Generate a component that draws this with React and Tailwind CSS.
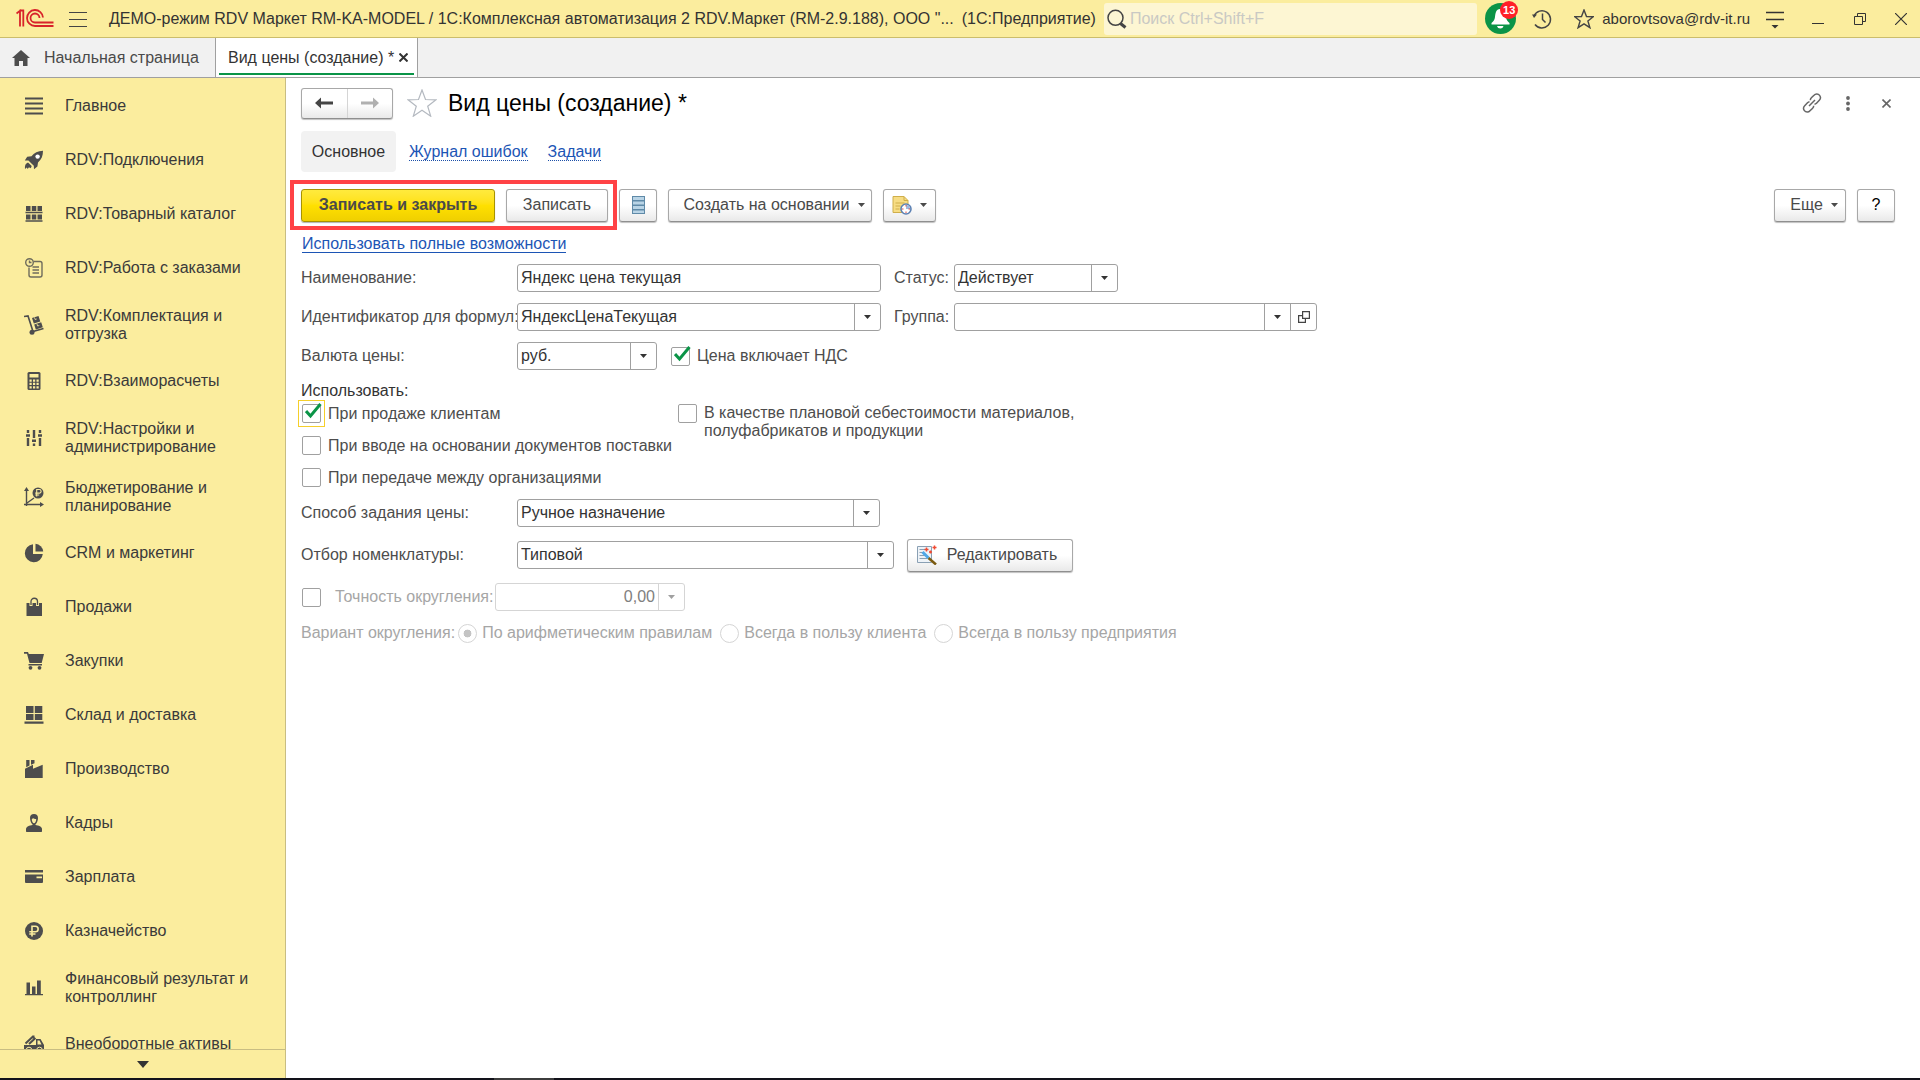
const FONT = "font-['Liberation_Sans',Arial,sans-serif]"

const buttonBase =
  "flex h-[33px] shrink-0 items-center justify-center rounded-[3px] border border-[#a8a8a8] border-b-[#8f8f8f] bg-linear-to-b from-white from-50% to-[#e9e9e9] text-[#4a4a4a] shadow-[0_1px_1px_rgba(0,0,0,0.25)]"

const icons = {
  menu: <path d="M1 2.5h18M1 7.5h18M1 12.5h18M1 17.5h18" stroke="currentColor" strokeWidth="2.2" />,
  rocket: (
    <>
      <path
        fill="currentColor"
        d="M19 .8C14 1 10 3 7.5 6.2L3.2 6.8.8 10.4l3.6.2 5.4 5.2.2 3.4 3.4-2.8.6-4C17.5 9.5 19 6 19 .8z"
      />
      <circle cx="13.6" cy="6.6" r="2.2" fill="#fff" />
      <path fill="currentColor" d="M4 12.5c-2.500 1-3.500 3-3 6.500l1.800-1.600.8 1.600 1.400-1.800 1.500 1c.6-.6 1-1.300 1.200-2.200z" />
    </>
  ),
  catalog: (
    <path
      fill="currentColor"
      d="M2 2h4.500v5H2zM7.800 2h4.500v5H7.800zM13.5 2H18v5h-4.500zM1.500 7.800h17v1.500h-17zM2 10.500h4.500v5H2zM7.800 10.500h4.500v5H7.800zM13.5 10.500H18v5h-4.500zM1.500 16.200h17v1.600h-17z"
    />
  ),
  orders: (
    <g fill="none" stroke="currentColor" strokeWidth="1.4" opacity=".8">
      <path d="M9.500 3.500H16a2 2 0 0 1 2 2V17a2 2 0 0 1-2 2H7a2 2 0 0 1-2-2V9.500" />
      <circle cx="5.500" cy="4.500" r="3.800" />
      <path d="M5.500 2.500v2h2M8.500 9h6.500M8.500 12h6.500M8.500 15h6.500" />
    </g>
  ),
  trolley: (
    <>
      <path d="M0 1.500l4-.5 5 15.500 10.500-3" fill="none" stroke="currentColor" strokeWidth="1.6" />
      <path fill="currentColor" d="M8 3l6.500-2 1.800 5.500-6.500 2zM10.200 9.500l7-2.200 1.600 5-7 2.200z" />
      <path d="M10.500 2.500l.6 2 1.600-.5M13 9l.6 2 1.700-.5" fill="none" stroke="#fbed9e" strokeWidth=".8" />
      <circle cx="8" cy="17.300" r="2.500" fill="currentColor" />
    </>
  ),
  calculator: (
    <>
      <rect x="3.5" y="1" width="13" height="18" rx="1.5" fill="currentColor" />
      <path
        fill="#fbed9e"
        d="M5.500 3h9v3.500h-9zM5.500 8.500h2.200v2.200H5.500zM9 8.500h2.200v2.200H9zM12.500 8.500h2.200v2.200h-2.200zM5.500 11.800h2.200V14H5.500zM9 11.800h2.200V14H9zM12.500 11.800h2.200V14h-2.200zM5.500 15.200h2.200v2.200H5.500zM9 15.200h2.200v2.200H9zM12.500 15.200h2.200v2.200h-2.200z"
      />
    </>
  ),
  sliders: (
    <g stroke="currentColor">
      <path strokeWidth="2.400" d="M4 2v3M4 10v8M10 2v8M10 15.500V18M16 2v3M16 10v8" />
      <path strokeWidth="2.400" d="M2 7.500h4M8 12.800h4M14 7.500h4" />
    </g>
  ),
  budget: (
    <>
      <path d="M2.500 19V3M0 17.500h17M3 16l7-5" fill="none" stroke="currentColor" strokeWidth="1.4" />
      <path fill="currentColor" d="M2.500 0L5 4H0zM20 17.500L16 20v-5z" />
      <circle cx="14" cy="6" r="5.500" fill="currentColor" />
      <path d="M12.700 9.500v-7h2.600a1.700 1.700 0 0 1 0 3.600h-4.100M11.200 8h4" fill="none" stroke="#fbed9e" strokeWidth="1.1" />
    </>
  ),
  pie: (
    <>
      <path fill="currentColor" d="M9 1.200V11h9.800A9 9 0 1 1 9 1.200z" />
      <path fill="currentColor" d="M11.500.8a8.500 8.500 0 0 1 7.700 7.700h-7.700z" />
    </>
  ),
  bag: (
    <>
      <path fill="currentColor" d="M2.500 6H18v13H2.500z" />
      <path d="M7 9V4.500a3.200 3.200 0 0 1 6.500 0V9" fill="none" stroke="#fbed9e" strokeWidth="3" />
      <path d="M7 8V4.500a3.200 3.200 0 0 1 6.500 0V8" fill="none" stroke="currentColor" strokeWidth="1.3" />
    </>
  ),
  cart: (
    <>
      <path fill="currentColor" d="M0 1h4l.8 2H20l-2.300 9H5.500L3 2.800H0zM4.500 13h13.500v1.500H4.500z" />
      <circle cx="6.500" cy="16.800" r="1.900" fill="currentColor" />
      <circle cx="15.500" cy="16.800" r="1.900" fill="currentColor" />
    </>
  ),
  warehouse: (
    <path fill="currentColor" d="M2 1h7.500v7H2zM10.800 1h7.500v7h-7.500zM2 9h7.500v6H2zM10.800 9h7.500v6h-7.500zM.5 16.500h19v2.200H.5z" />
  ),
  factory: <path fill="currentColor" d="M1 19V9.800l8-4v4l9.700-4V19zM2.200 1H5.500v5.500L2.200 8.200zM7 1h3.500v3.200L7 5.800z" />,
  person: (
    <path
      fill="currentColor"
      fillRule="evenodd"
      d="M10 1c2.600 0 4 1.600 4 4s-1 5.200-2.500 6.200V12c3 .5 6.500 1.500 6.500 4v2c0 1-.5 1-1.500 1h-13c-1 0-1.500 0-1.500-1v-2c0-2.500 3.500-3.500 6.500-4v-.8C7 10.200 6 7.400 6 5s1.400-4 4-4zM7.800 6c0 2.400 1 4.200 2.200 4.200S12.200 8.400 12.200 6C11 6 9.500 5.800 9 5c-.2.600-.6 1-1.200 1z"
    />
  ),
  card: <path fill="currentColor" fillRule="evenodd" d="M1 3h18v2.500H1zM1 7.500h18V15a1 1 0 0 1-1 1H2a1 1 0 0 1-1-1zM12.500 9.500v1.800H18V9.500z" />,
  ruble: (
    <>
      <circle cx="10" cy="10" r="9" fill="currentColor" />
      <path d="M8 15.500V5.200h3.400a2.700 2.700 0 0 1 0 5.500H5.300M5.300 13h6.200" fill="none" stroke="#fbed9e" strokeWidth="1.6" />
    </>
  ),
  bars: <path fill="currentColor" d="M2.500 4.500H6V16H2.500zM8 8.500h3.500V16H8zM13 2.500h3.800V16H13zM1 16h18v1.200H1z" />,
  truck: (
    <>
      <path fill="currentColor" fillRule="evenodd" d="M0 11h12V5h4.500l3.500 6v6H0zM13.500 6.500v4h4l-2-4z" />
      <path d="M1.500 9.500L9.500 2M5 10l6.500-6M9.500 1.500v3" fill="none" stroke="currentColor" strokeWidth="2" />
      <circle cx="5" cy="16" r="2.800" fill="currentColor" stroke="#fbed9e" />
      <circle cx="15.500" cy="16" r="2.800" fill="currentColor" stroke="#fbed9e" />
    </>
  ),
}

const sections = [
  { name: "Главное", icon: "menu" },
  { name: "RDV:Подключения", icon: "rocket" },
  { name: "RDV:Товарный каталог", icon: "catalog" },
  { name: "RDV:Работа с заказами", icon: "orders" },
  { name: "RDV:Комплектация и отгрузка", icon: "trolley", tall: true },
  { name: "RDV:Взаиморасчеты", icon: "calculator" },
  { name: "RDV:Настройки и администрирование", icon: "sliders", tall: true },
  { name: "Бюджетирование и планирование", icon: "budget", tall: true },
  { name: "CRM и маркетинг", icon: "pie" },
  { name: "Продажи", icon: "bag" },
  { name: "Закупки", icon: "cart" },
  { name: "Склад и доставка", icon: "warehouse" },
  { name: "Производство", icon: "factory" },
  { name: "Кадры", icon: "person" },
  { name: "Зарплата", icon: "card" },
  { name: "Казначейство", icon: "ruble" },
  { name: "Финансовый результат и контроллинг", icon: "bars", tall: true },
  { name: "Внеоборотные активы", icon: "truck" },
]

function Caret({ className = "" }) {
  return (
    <svg className={`h-1 w-[7px] shrink-0 ${className}`} viewBox="0 0 7 4" fill="currentColor">
      <path d="M0 0h7L3.500 4z" />
    </svg>
  )
}

function Logo() {
  return (
    <svg className="h-5 w-[38px]" viewBox="0 0 38 20" fill="none" stroke="#d8232a">
      <path strokeWidth="1.8" d="M.5 4.500L4 1.800V17.500M3.500 1.500h3.800v16" />
      <path strokeWidth="1.8" d="M27 8.500A8 8 0 1 0 19 17H37.500" />
      <path strokeWidth="1.8" d="M23.500 9a4.500 4.500 0 1 0-4.500 4.500H37.500" />
    </svg>
  )
}

function TopBar() {
  return (
    <header className="flex h-[38px] shrink-0 items-center border-b border-[#cbbd6c] bg-[#fbed9e] pl-4 text-[#333]">
      <Logo />
      <button aria-label="Меню" className="ml-[15px]">
        <svg className="h-[18px] w-[18px]" viewBox="0 0 18 18" stroke="#444" strokeWidth="1.2">
          <path d="M0 2.500h18M0 9.500h18M0 16.500h18" />
        </svg>
      </button>
      <span className="ml-[22px] shrink-0 whitespace-nowrap">
        ДЕМО-режим RDV Маркет RM-KA-MODEL / 1С:Комплексная автоматизация 2 RDV.Маркет (RM-2.9.188), ООО "...
      </span>
      <span className="ml-2 shrink-0">(1С:Предприятие)</span>
      <label className="ml-2 flex h-8 min-w-0 flex-1 items-center rounded-[3px] bg-[#fdf6d3] pl-[3px]">
        <svg className="h-5 w-5 shrink-0" viewBox="0 0 20 20" fill="none" stroke="#444">
          <circle cx="8.500" cy="8.800" r="7.500" strokeWidth="1.5" />
          <path d="M13.500 14.500l5 4" strokeWidth="3" />
        </svg>
        <input
          aria-label="Поиск"
          placeholder="Поиск Ctrl+Shift+F"
          className="ml-[3px] w-full min-w-0 bg-transparent outline-none placeholder:text-[#c9c9c4]"
        />
      </label>
      <button aria-label="Оповещения" className="relative ml-2 h-[31px] w-[31px] shrink-0 rounded-full bg-[#0a9447]">
        <svg className="h-[31px] w-[31px]" viewBox="0 0 31 31" fill="#fff">
          <path d="M15 6c-4 0-4.500 4-5 8-.4 3-1.500 4-3.500 6v1.500h18V20c-2-2-3.100-3-3.500-6-.5-4-1.500-8-6-8zM12 23h6.500c-.5 1.700-1.500 2.500-3.200 2.500S12.500 24.700 12 23z" />
        </svg>
        <span className="absolute -top-0.5 left-[15px] flex h-[18px] w-[18px] items-center justify-center rounded-full bg-[#ff2027] text-[11px] font-bold text-white">
          13
        </span>
      </button>
      <button aria-label="История" className="ml-4">
        <svg className="h-5 w-5" viewBox="0 0 20 20" fill="none" stroke="#444" strokeWidth="1.5">
          <path d="M2 7A8.600 8.600 0 1 1 3 15.500M10.500 4.500v6l3 3" />
          <path d="M0 5.500h5L2 9z" fill="#444" stroke="none" />
        </svg>
      </button>
      <button aria-label="Избранное" className="ml-[22px]">
        <svg className="h-5 w-5" viewBox="0 0 20 20" fill="none" stroke="#444" strokeWidth="1.4">
          <path d="M10 1l2.500 6.500 6.800.2-5.400 4.200 2 6.800L10 14.800l-5.900 3.900 2-6.800L.7 7.700l6.800-.2z" />
        </svg>
      </button>
      <span className="ml-2 shrink-0 text-[15px]">aborovtsova@rdv-it.ru</span>
      <button aria-label="Настройки" className="ml-4">
        <svg className="h-5 w-[18px]" viewBox="0 0 18 20" stroke="#333" strokeWidth="1.3">
          <path d="M0 3.500h18M0 10.500h18" />
          <path d="M5.500 16h7L9 19.500z" fill="#333" stroke="none" />
        </svg>
      </button>
      <button aria-label="Свернуть" className="ml-7">
        <svg className="h-3 w-3" viewBox="0 0 12 12" stroke="#333">
          <path d="M0 10.500h12" />
        </svg>
      </button>
      <button aria-label="Развернуть" className="ml-[30px]">
        <svg className="h-3 w-3" viewBox="0 0 12 12" fill="none" stroke="#333">
          <path d="M.5 3.500h8v8h-8zM3.500 3V.5h8v8H9" />
        </svg>
      </button>
      <button aria-label="Закрыть" className="mr-[13px] ml-[29px]">
        <svg className="h-3 w-3" viewBox="0 0 12 12" stroke="#333" strokeWidth="1.2">
          <path d="M0 0l12 12M12 0L0 12" />
        </svg>
      </button>
    </header>
  )
}

function WindowTabs() {
  return (
    <nav className="flex h-10 shrink-0 border-b border-[#a0a0a0] bg-[#f1f1f1] text-[#4a4a4a]">
      <button className="flex w-[215px] items-center pl-3">
        <svg className="h-4 w-[18px]" viewBox="0 0 18 16" fill="#4d4d4d">
          <path d="M9 0l9 8h-2.500v8H11v-5H7v5H2.500V8H0z" />
        </svg>
        <span className="ml-3.5">Начальная страница</span>
      </button>
      <div className="flex w-[203px] flex-col border-x border-[#a0a0a0] bg-white px-[3px] text-[#333]">
        <div className="flex h-[35px] items-center pt-1 pl-[9px]">
          <span className="whitespace-nowrap">Вид цены (создание) *</span>
          <button aria-label="Закрыть вкладку" className="ml-[5px]">
            <svg className="h-[9px] w-[9px]" viewBox="0 0 9 9" stroke="#333" strokeWidth="2">
              <path d="M.5.500l8 8M8.500.500l-8 8" />
            </svg>
          </button>
        </div>
        <div className="h-0.5 bg-[#0a9447]" />
      </div>
    </nav>
  )
}

function Sidebar() {
  return (
    <aside className="flex w-[286px] shrink-0 flex-col border-r border-[#c8bd82] bg-[#fbed9e] text-[#3a3a3a]">
      <nav className="min-h-0 flex-1 overflow-hidden pt-px">
        {sections.map((section) => (
          <a
            key={section.name}
            href="#"
            className={`flex items-center pr-8 pl-6 leading-[18px] ${section.tall ? "h-[59px]" : "h-[54px]"}`}
          >
            <svg className="h-5 w-5 shrink-0 text-[#4d4d4d]" viewBox="0 0 20 20" fill="none">
              {icons[section.icon]}
            </svg>
            <span className="ml-[21px]">{section.name}</span>
          </a>
        ))}
      </nav>
      <button aria-label="Прокрутить вниз" className="flex h-[29px] items-center justify-center border-t border-[#c8bd82]">
        <svg className="h-[7px] w-3" viewBox="0 0 12 7" fill="#333">
          <path d="M0 0h12L6 7z" />
        </svg>
      </button>
    </aside>
  )
}

function FormHeader() {
  return (
    <div className="flex h-8 items-center">
      <div className="flex h-[31px] w-[92px] rounded-[3px] border border-[#a8a8a8] border-b-[#8f8f8f] bg-linear-to-b from-white from-50% to-[#e9e9e9] shadow-[0_1px_1px_rgba(0,0,0,0.25)]">
        <button aria-label="Назад" className="flex flex-1 items-center justify-center border-r border-[#d5d5d5] text-[#444]">
          <svg className="h-3 w-[18px]" viewBox="0 0 18 12" fill="currentColor">
            <path d="M0 6l6-5.500V4.500h12v3H6v4z" />
          </svg>
        </button>
        <button aria-label="Вперед" className="flex flex-1 items-center justify-center text-[#b0b0b0]">
          <svg className="h-3 w-[18px]" viewBox="0 0 18 12" fill="currentColor">
            <path d="M18 6L12 .5V4.500H0v3h12v4z" />
          </svg>
        </button>
      </div>
      <button aria-label="Добавить в избранное" className="ml-3.5">
        <svg className="h-7 w-[30px]" viewBox="0 0 30 28" fill="none" stroke="#b4b9c0" strokeWidth="1.2">
          <path d="M15 1l3.500 9.500 10.500.3-8.300 6.400 3 10L15 21.300 6.300 27.200l3-10L1 10.800l10.500-.3z" />
        </svg>
      </button>
      <h1 className="ml-[11px] text-[23px] text-black">Вид цены (создание) *</h1>
      <div className="mr-[29px] ml-auto flex items-center text-[#666]">
        <button aria-label="Ссылка">
          <svg className="h-5 w-5" viewBox="0 0 20 20" fill="none" stroke="currentColor" strokeWidth="1.5">
            <path d="M8.300 7.300C8.300 6 8.800 5.300 9.600 4.500L12 2.200a3.600 3.600 0 0 1 5.600.2c1.100 1.500 1 3.600-.3 4.900l-2.800 2.900c-.5.500-1.200.9-2 1M11.700 12.700c0 1.300-.5 2-1.300 2.800L8 17.800a3.600 3.600 0 0 1-5.600-.2c-1.100-1.500-1-3.600.3-4.900l2.800-2.900c.5-.5 1.200-.9 2-1M7 13l6-6" />
          </svg>
        </button>
        <button aria-label="Действия" className="ml-6">
          <svg className="h-[15px] w-1" viewBox="0 0 4 15" fill="currentColor">
            <circle cx="2" cy="2" r="1.900" />
            <circle cx="2" cy="7.500" r="1.900" />
            <circle cx="2" cy="13" r="1.900" />
          </svg>
        </button>
        <button aria-label="Закрыть форму" className="ml-8">
          <svg className="h-[9px] w-[9px]" viewBox="0 0 9 9" stroke="currentColor" strokeWidth="1.6">
            <path d="M.5.500l8 8M8.500.500l-8 8" />
          </svg>
        </button>
      </div>
    </div>
  )
}

function Toolbar() {
  return (
    <div className="flex items-center">
      {/* highlighted save buttons */}
      <div className="-my-2 -ml-[11px] flex h-[50px] w-[327px] shrink-0 items-center gap-[11px] border-4 border-[#ff4245] pl-[7px]">
        <button className="flex h-[33px] w-[194px] items-center justify-center rounded-[3px] border border-[#a79300] bg-linear-to-b from-[#ffea3d] via-[#ffe000] to-[#efcf00] font-bold text-[#4a4a4a] shadow-[0_1px_1px_rgba(0,0,0,0.3)]">
          Записать и закрыть
        </button>
        <button className={`${buttonBase} w-[102px]`}>Записать</button>
      </div>
      <button aria-label="Структура" className={`${buttonBase} ml-0.5 w-[38px]`}>
        <svg className="h-[18px] w-[13px]" viewBox="0 0 13 18">
          <path fill="#5f8aa8" d="M0 0h13v18H0z" />
          <path fill="#b9d4e6" d="M1 1h11v3H1zM1 5.500h11v3H1zM1 10h11v3H1zM1 14.500h11V17H1z" />
        </svg>
      </button>
      <button className={`${buttonBase} ml-[11px] w-[204px] gap-2 pl-2`}>
        Создать на основании
        <Caret />
      </button>
      <button aria-label="Напоминания" className={`${buttonBase} ml-[11px] w-[53px] gap-2`}>
        <svg className="h-5 w-5" viewBox="0 0 20 20">
          <path d="M1 1.500h11l4 4V17.500H1z" fill="#f7dd84" stroke="#cfae4a" />
          <path d="M12 1.500v4h4M3.500 8h9M3.500 11h5M3.500 14h4" fill="none" stroke="#cfae4a" />
          <circle cx="14" cy="14" r="5" fill="#fff" stroke="#5d82b4" strokeWidth="1.6" />
          <path d="M14 14v-4a4 4 0 0 1 4 4z" fill="#9db8e0" />
          <path d="M14 10v1.500M14 16.500V18M10 14h1.500M16.500 14H18" stroke="#e0483e" />
        </svg>
        <Caret />
      </button>
      <button className={`${buttonBase} ml-auto w-[72px] gap-2 pl-2`}>
        Еще
        <Caret />
      </button>
      <button aria-label="Справка" className={`${buttonBase} mr-[25px] ml-[11px] w-[38px] text-black`}>
        ?
      </button>
    </div>
  )
}

function Label({ htmlFor, className = "", children }) {
  return (
    <label htmlFor={htmlFor} className={`shrink-0 whitespace-nowrap ${className}`}>
      {children}
    </label>
  )
}

function Dropdown({ id, value, width, open }) {
  return (
    <div className={`flex h-7 shrink-0 rounded-[3px] border border-[#a0a0a0] bg-white text-[#333] ${width}`}>
      <div className="relative flex min-w-0 flex-1">
        <select id={id} defaultValue={value} className="w-full appearance-none bg-transparent pl-[3px] outline-none">
          <option>{value}</option>
        </select>
        <span className="pointer-events-none absolute inset-y-0 right-0 flex w-[26px] items-center justify-center border-l border-[#a0a0a0]">
          <Caret />
        </span>
      </div>
      {open && (
        <button
          type="button"
          aria-label="Открыть"
          className="flex w-[26px] items-center justify-center border-l border-[#a0a0a0]"
        >
          <svg className="h-3 w-3" viewBox="0 0 12 12" fill="none" stroke="#444" strokeWidth="1.2">
            <path d="M4.600.600h6.800v6.800H4.600zM4 4.600H.600v6.800h6.800V8" />
          </svg>
        </button>
      )}
    </div>
  )
}

function Checkbox({ id, checked, focused }) {
  return (
    <span
      className={`relative -m-1 flex h-[27px] w-[27px] shrink-0 items-center justify-center border ${focused ? "border-[#f5cf2b]" : "border-transparent"}`}
    >
      <input
        id={id}
        type="checkbox"
        defaultChecked={checked}
        className="peer h-[19px] w-[19px] appearance-none rounded-[2px] border border-[#a0a0a0] bg-white outline-none"
      />
      <svg
        className="pointer-events-none absolute top-0.5 left-1.5 hidden h-4 w-[17px] peer-checked:block"
        viewBox="0 0 17 16"
        fill="none"
        stroke="#0a9447"
        strokeWidth="3"
      >
        <path d="M1 8l4.500 5L15.500 1" />
      </svg>
    </span>
  )
}

function Radio({ id, label, checked }) {
  return (
    <span className="flex shrink-0 items-center">
      <input
        id={id}
        name="rounding"
        type="radio"
        disabled
        defaultChecked={checked}
        className="h-[19px] w-[19px] appearance-none rounded-full border border-[#d5d5d5] bg-white checked:bg-radial checked:from-[#c4c4c4] checked:from-30% checked:to-white checked:to-35%"
      />
      <Label htmlFor={id} className="ml-[5px]">
        {label}
      </Label>
    </span>
  )
}

function PriceForm() {
  return (
    <form className="text-[#4d4d4d]">
      <div className="mt-[11px] flex h-7 items-center">
        <Label htmlFor="name" className="w-[216px]">
          Наименование:
        </Label>
        <input
          id="name"
          defaultValue="Яндекс цена текущая"
          className="h-7 w-[364px] rounded-[3px] border border-[#a0a0a0] px-[3px] text-[#333] outline-none"
        />
        <Label htmlFor="status" className="ml-[13px] w-[60px]">
          Статус:
        </Label>
        <Dropdown id="status" value="Действует" width="w-[164px]" />
      </div>
      <div className="mt-[11px] flex h-7 items-center">
        <Label htmlFor="ident" className="w-[216px]">
          Идентификатор для формул:
        </Label>
        <Dropdown id="ident" value="ЯндексЦенаТекущая" width="w-[364px]" />
        <Label htmlFor="group" className="ml-[13px] w-[60px]">
          Группа:
        </Label>
        <Dropdown id="group" value="" width="w-[363px]" open />
      </div>
      <div className="mt-[11px] flex h-7 items-center">
        <Label htmlFor="currency" className="w-[216px]">
          Валюта цены:
        </Label>
        <Dropdown id="currency" value="руб." width="w-[140px]" />
        <span className="ml-3.5 flex items-center">
          <Checkbox id="vat" checked />
          <Label htmlFor="vat" className="ml-[7px]">
            Цена включает НДС
          </Label>
        </span>
      </div>

      <fieldset className="mt-3">
        <legend className="leading-[18px] text-[#333]">Использовать:</legend>
        <div className="mt-1 ml-px flex items-start">
          <div className="flex w-[376px] shrink-0 flex-col gap-[13px]">
            <span className="flex h-[19px] items-center">
              <Checkbox id="sale" checked focused />
              <Label htmlFor="sale" className="ml-[7px]">
                При продаже клиентам
              </Label>
            </span>
            <span className="flex h-[19px] items-center">
              <Checkbox id="supply" />
              <Label htmlFor="supply" className="ml-[7px]">
                При вводе на основании документов поставки
              </Label>
            </span>
            <span className="flex h-[19px] items-center">
              <Checkbox id="transfer" />
              <Label htmlFor="transfer" className="ml-[7px]">
                При передаче между организациями
              </Label>
            </span>
          </div>
          <span className="flex items-start">
            <Checkbox id="cost" />
            <Label htmlFor="cost" className="ml-[7px] leading-[18px]">
              В качестве плановой себестоимости материалов,
              <br />
              полуфабрикатов и продукции
            </Label>
          </span>
        </div>
      </fieldset>

      <div className="mt-3 flex h-7 items-center">
        <Label htmlFor="method" className="w-[216px]">
          Способ задания цены:
        </Label>
        <Dropdown id="method" value="Ручное назначение" width="w-[363px]" />
      </div>
      <div className="mt-3.5 flex h-7 items-center">
        <Label htmlFor="filter" className="w-[216px]">
          Отбор номенклатуры:
        </Label>
        <Dropdown id="filter" value="Типовой" width="w-[377px]" />
        <button type="button" className={`${buttonBase} ml-[13px] w-[166px] gap-2.5 pr-1.5`}>
          <svg className="h-5 w-5" viewBox="0 0 20 20" fill="none">
            <path d="M.5 1.500h14v16H.5z" fill="#eef3f8" stroke="#8aa0b4" />
            <path d="M2.500 4.500h7M2.500 7.500h4M2.500 10.500h6M2.500 13.500h8" stroke="#8aa0b4" />
            <path d="M5.500 7l6 6" stroke="#4fa8e8" strokeWidth="3" />
            <path d="M11.500 13l7.500 6.500" stroke="#7a5a10" strokeWidth="2.5" />
            <path d="M9.500 2.500v4M7.500 4.500h4M17.500.500v4M15.500 2.500h4M13.500 5.500v3M12 7h3" stroke="#f04a32" strokeWidth="1.5" />
          </svg>
          Редактировать
        </button>
      </div>
      <div className="mt-3.5 ml-px flex h-7 items-center">
        <Checkbox id="useRounding" />
        <Label htmlFor="useRounding" className="ml-3.5 w-[160px] text-[#a6a6a6]">
          Точность округления:
        </Label>
        <div className="flex h-7 w-[190px] rounded-[3px] border border-[#d5d5d5] text-[#808080]">
          <input
            aria-label="Точность округления"
            disabled
            defaultValue="0,00"
            className="min-w-0 flex-1 pr-[3px] text-right"
          />
          <button
            type="button"
            disabled
            aria-label="Выбрать"
            className="flex w-[26px] items-center justify-center border-l border-[#d5d5d5] text-[#a0a0a0]"
          >
            <Caret />
          </button>
        </div>
      </div>
      <div className="mt-3 flex h-5 items-center gap-2 text-[#a6a6a6]">
        <span className="flex items-center gap-[3px]">
          Вариант округления:
          <Radio id="r1" label="По арифметическим правилам" checked />
        </span>
        <Radio id="r2" label="Всегда в пользу клиента" />
        <Radio id="r3" label="Всегда в пользу предприятия" />
      </div>
    </form>
  )
}

function App() {
  return (
    <div className={`flex h-screen flex-col overflow-hidden bg-white text-[16px] leading-5 ${FONT}`}>
      <TopBar />
      <WindowTabs />
      <div className="flex min-h-0 flex-1">
        <Sidebar />
        <main className="min-w-0 flex-1 overflow-hidden pt-[9px] pl-[15px]">
          <FormHeader />
          <nav className="mt-3 flex items-center">
            <button className="h-[41px] w-[95px] rounded-[4px] bg-[#f2f2f2] pt-px text-[#333]">Основное</button>
            <a href="#" className="mt-px ml-[13px] border-b border-dotted border-[#1c4fa8] leading-[17px] text-[#1c55b5]">
              Журнал ошибок
            </a>
            <a href="#" className="mt-px ml-5 border-b border-dotted border-[#1c4fa8] leading-[17px] text-[#1c55b5]">
              Задачи
            </a>
          </nav>
          <div className="mt-4">
            <Toolbar />
          </div>
          <a href="#" className="mt-[13px] ml-px block w-fit border-b border-[#1c55b5] leading-[17px] text-[#1c55b5]">
            Использовать полные возможности
          </a>
          <PriceForm />
        </main>
      </div>
      {/* edge of the system taskbar */}
      <div className="flex h-0.5 shrink-0 bg-[#12121a] pl-[494px]">
        <div className="w-[60px] bg-[#3c3c3c]" />
      </div>
    </div>
  )
}

export default App
